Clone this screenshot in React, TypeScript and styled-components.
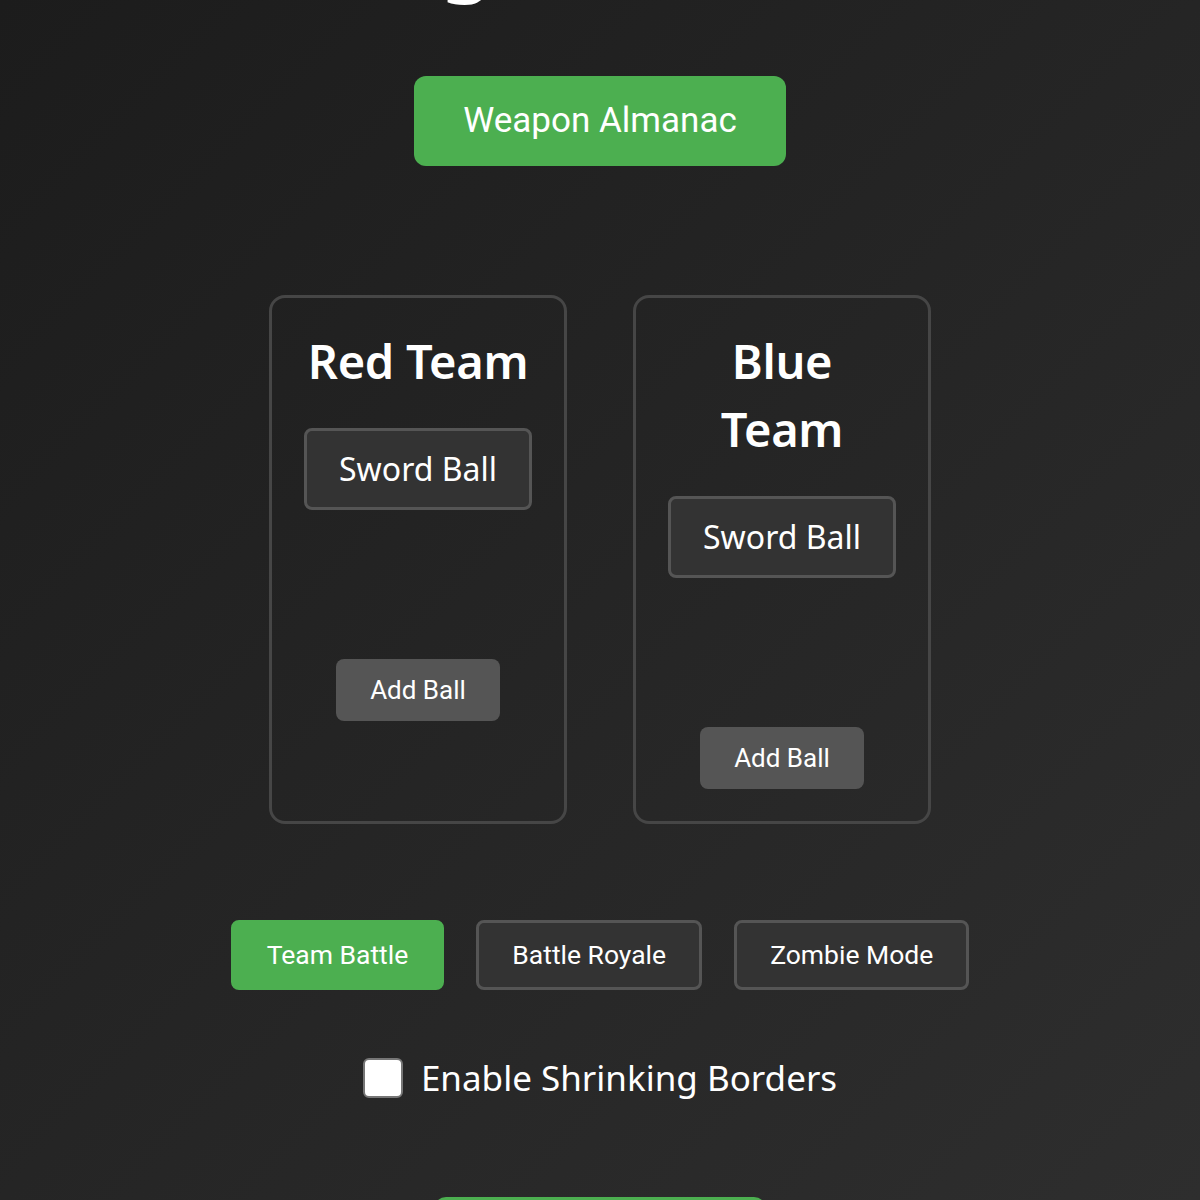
import { useState } from "react";
import styled, { createGlobalStyle } from "styled-components";

const GlobalStyle = createGlobalStyle`
  html, body {
    margin: 0;
    padding: 0;
  }

  body {
    background: linear-gradient(135deg, #1c1c1c 0%, #2e2e2e 100%);
    color: #fff;
    font-family: "Noto Sans", "Open Sans", sans-serif;
    min-height: 100vh;
  }
`;

type Team = { name: string; balls: string[] };

const initialTeams: Team[] = [
  { name: "Red Team", balls: ["Sword Ball"] },
  { name: "Blue Team", balls: ["Sword Ball"] },
];

const modes = ["Team Battle", "Battle Royale", "Zombie Mode"];

export default function App() {
  const [teams, setTeams] = useState(initialTeams);
  const [mode, setMode] = useState("Team Battle");
  const [shrinking, setShrinking] = useState(false);

  const addBall = (index: number) => {
    setTeams((prev) =>
      prev.map((t, i) =>
        i === index ? { ...t, balls: [...t.balls, "Sword Ball"] } : t
      )
    );
  };

  return (
    <>
      <GlobalStyle />
      <Page>
        <Title>Ball Fight Simulator</Title>
        <AlmanacButton type="button">Weapon Almanac</AlmanacButton>

        <TeamsRow>
          {teams.map((team, i) => (
            <TeamCard key={team.name}>
              <TeamTitle>{team.name}</TeamTitle>
              <BallList>
                {team.balls.map((ball, j) => (
                  <BallChip key={j}>{ball}</BallChip>
                ))}
              </BallList>
              <AddBallButton type="button" onClick={() => addBall(i)}>
                Add Ball
              </AddBallButton>
            </TeamCard>
          ))}
        </TeamsRow>

        <ModeRow>
          {modes.map((m) => (
            <ModeButton
              key={m}
              type="button"
              $active={m === mode}
              onClick={() => setMode(m)}
            >
              {m}
            </ModeButton>
          ))}
        </ModeRow>

        <OptionRow>
          <Checkbox
            type="checkbox"
            checked={shrinking}
            onChange={(e) => setShrinking(e.target.checked)}
          />
          Enable Shrinking Borders
        </OptionRow>

        <StartButton type="button">Run Simulation</StartButton>
      </Page>
    </>
  );
}

// Styled Components
const Page = styled.main`
  height: 100vh;
  display: flex;
  flex-direction: column;
  align-items: center;
  justify-content: center;
  overflow: hidden;
`;

const Title = styled.h1`
  margin: 0 0 66px;
  font-size: 84px;
  line-height: 114px;
  font-weight: 600;
  color: #fff;
  white-space: nowrap;
`;

const PrimaryButton = styled.button`
  background: #4caf50;
  color: #fff;
  border: none;
  border-radius: 12px;
  font-family: Roboto, "Liberation Sans", sans-serif;
  font-size: 35px;
  line-height: 40px;
  padding: 25px 49px;
  cursor: pointer;
`;

const AlmanacButton = styled(PrimaryButton)`
  margin-bottom: 129px;
`;

const StartButton = styled(PrimaryButton)`
  margin-bottom: 17px;
`;

const TeamsRow = styled.section`
  display: flex;
  align-items: stretch;
  gap: 66px;
  margin-bottom: 96px;
`;

const TeamCard = styled.div`
  box-sizing: border-box;
  width: 298px;
  border: 3px solid #464646;
  border-radius: 16px;
  padding: 29px 34px 32px;
  display: flex;
  flex-direction: column;
  align-items: center;
  text-align: center;
`;

const TeamTitle = styled.h2`
  margin: 0 0 33px;
  font-size: 47px;
  line-height: 68px;
  font-weight: 600;
  letter-spacing: -0.3px;
  color: #fff;
`;

const BallList = styled.div`
  min-height: 231px;
  display: flex;
  flex-direction: column;
  align-items: center;
  gap: 12px;
`;

const BallChip = styled.div`
  padding: 16px 32px;
  border: 3px solid #555;
  border-radius: 8px;
  background: #333;
  font-size: 32px;
  line-height: 44px;
  white-space: nowrap;
`;

const AddBallButton = styled.button`
  background: #555;
  color: #fff;
  border: none;
  border-radius: 8px;
  font-family: Roboto, "Liberation Sans", sans-serif;
  font-size: 26px;
  line-height: 30px;
  padding: 16px 34px;
  cursor: pointer;
`;

const ModeRow = styled.div`
  display: flex;
  gap: 32px;
  margin-bottom: 64px;
`;

const ModeButton = styled.button<{ $active: boolean }>`
  border: 3px solid ${(p) => (p.$active ? "#4caf50" : "#555")};
  background: ${(p) => (p.$active ? "#4caf50" : "#333")};
  color: #fff;
  border-radius: 8px;
  font-family: Roboto, "Liberation Sans", sans-serif;
  font-size: 26.5px;
  line-height: 32px;
  padding: 16px 33px;
  cursor: pointer;
`;

const OptionRow = styled.label`
  display: flex;
  align-items: center;
  gap: 18px;
  font-size: 35px;
  line-height: 48px;
  margin-bottom: 95px;
  cursor: pointer;
`;

const Checkbox = styled.input`
  appearance: none;
  margin: 0;
  width: 40px;
  height: 40px;
  box-sizing: border-box;
  background: #fff;
  border: 2px solid #767676;
  border-radius: 6px;
  cursor: pointer;

  &:checked {
    background: #4caf50;
  }
`;
